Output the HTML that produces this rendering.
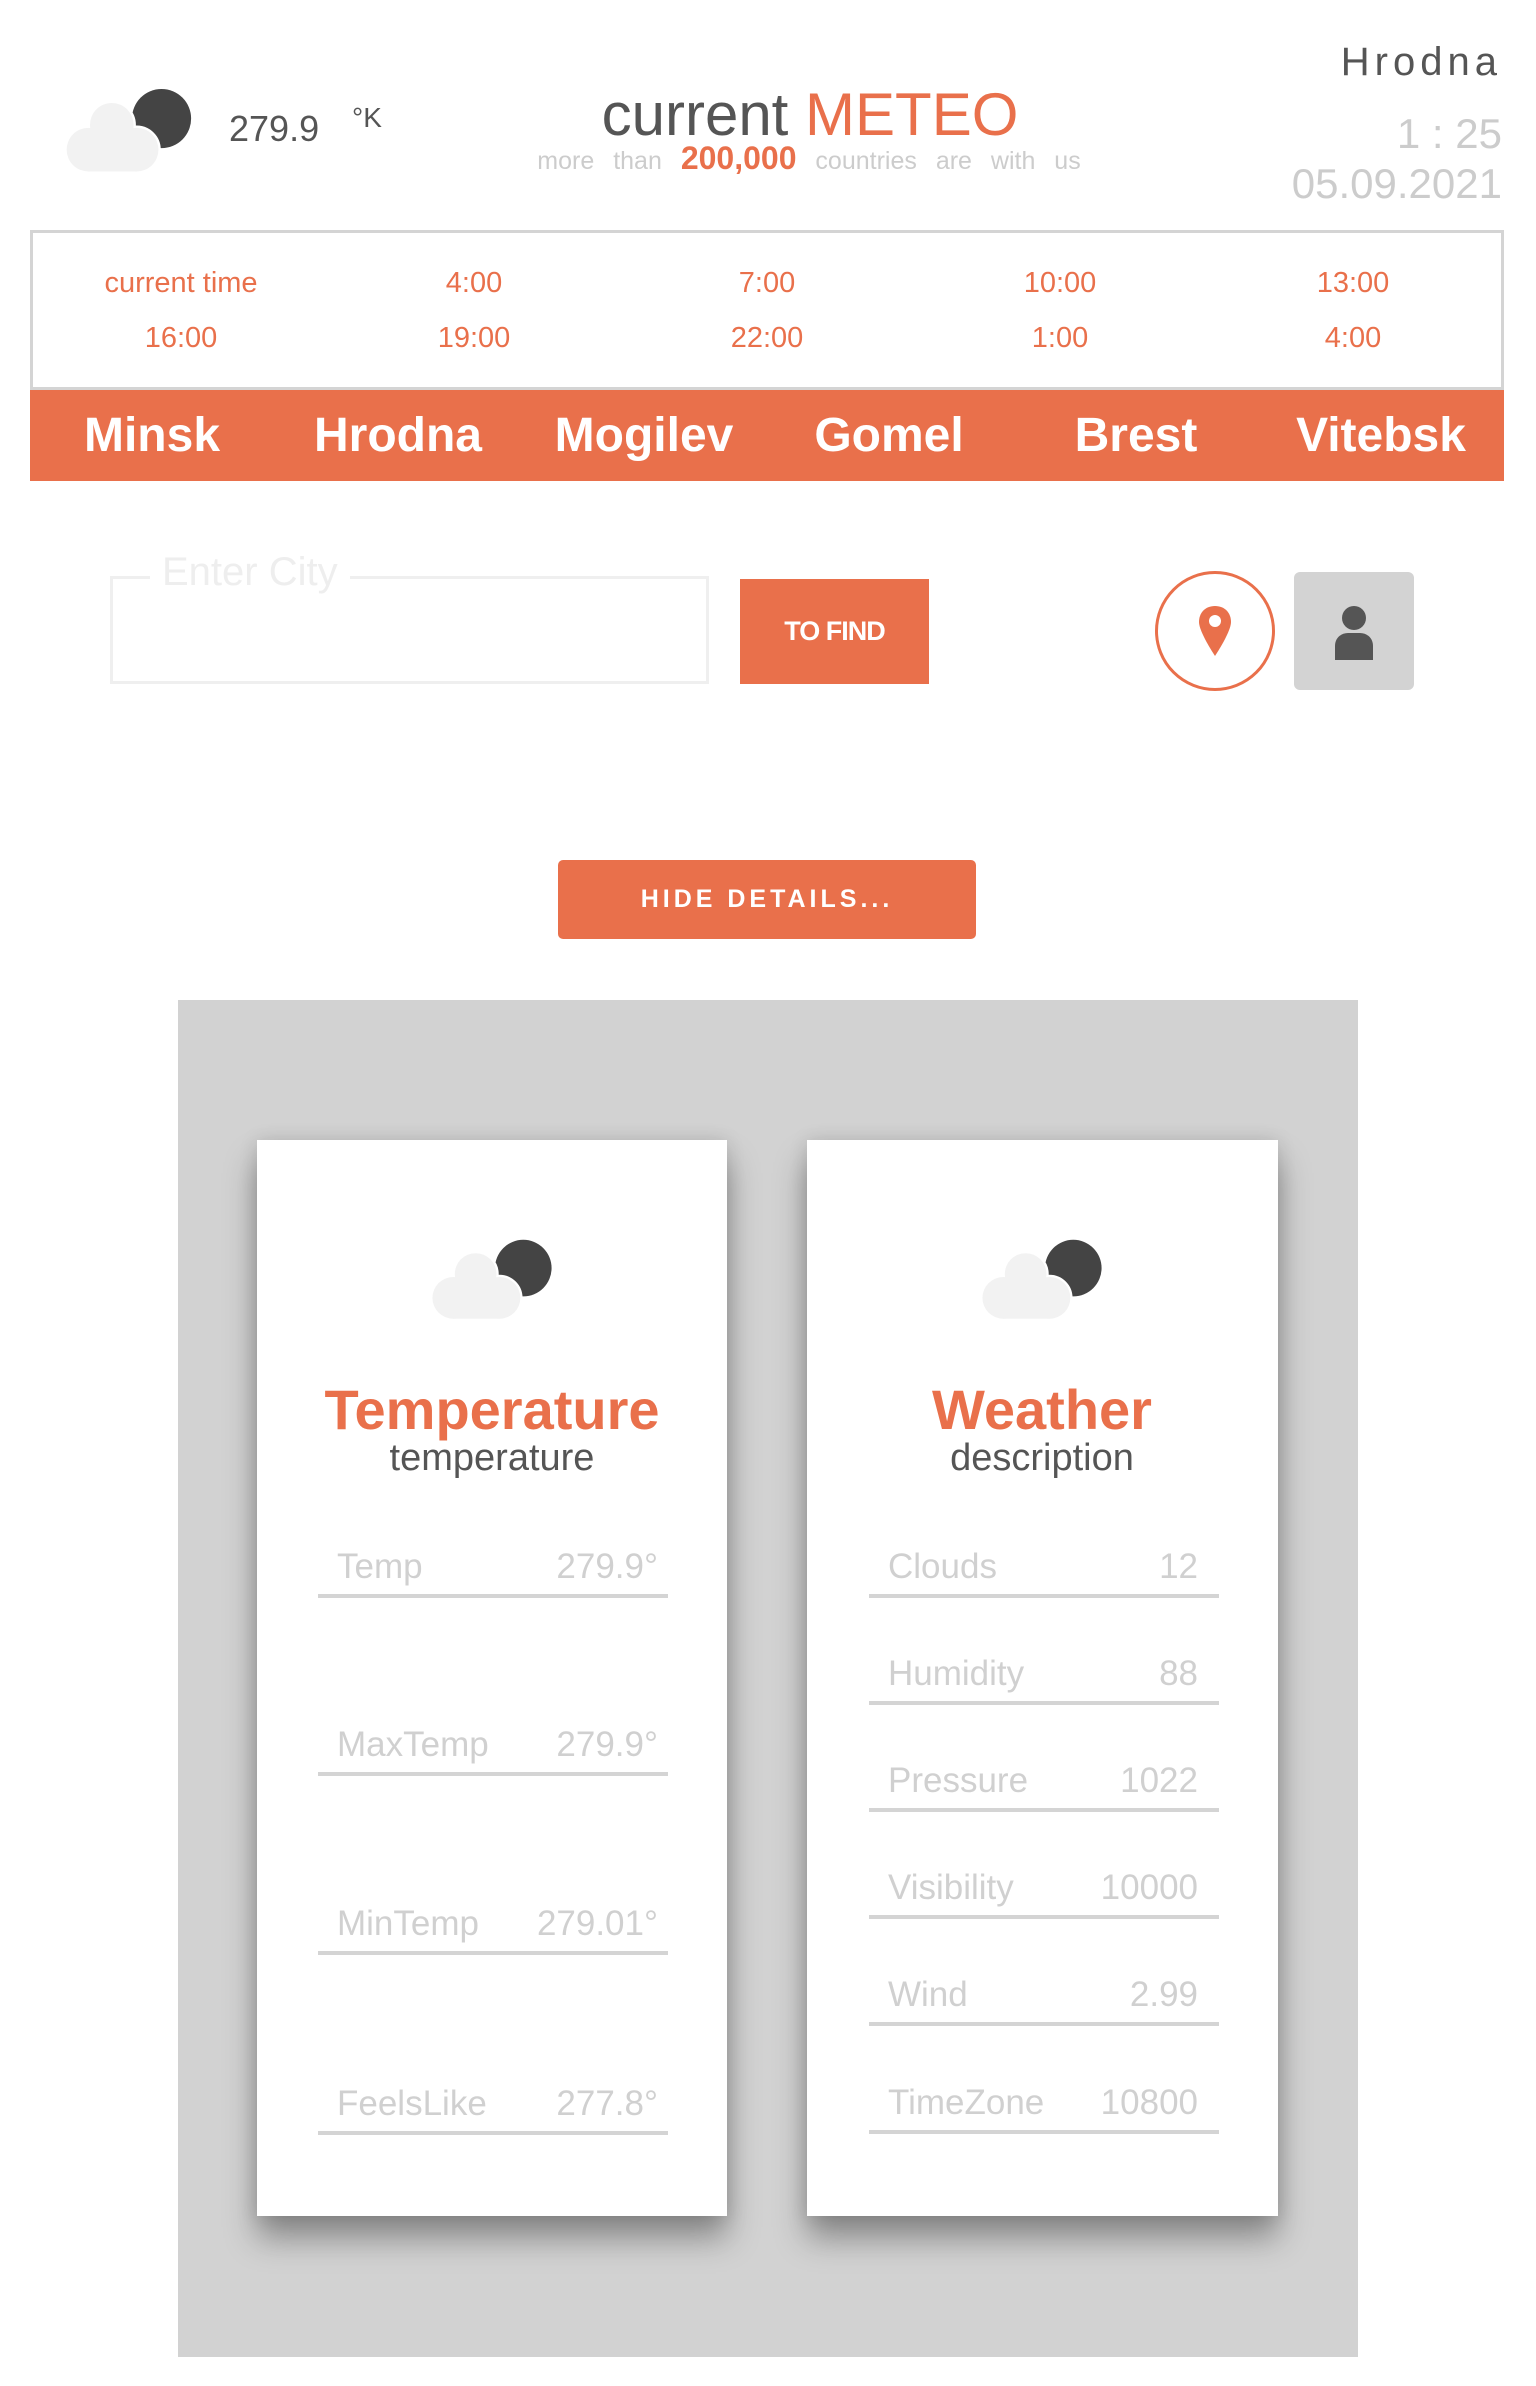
<!DOCTYPE html>
<html><head><meta charset="utf-8"><style>
*{margin:0;padding:0;box-sizing:border-box}
body{width:1536px;height:2386px;background:#fff;font-family:"Liberation Sans",sans-serif;position:relative;overflow:hidden}
.a{position:absolute}
.o{color:#e9704b}
.c{text-align:center;transform:translateX(-50%);white-space:nowrap}
.row{position:absolute;height:4px;background:#d4d4d4}
.lbl{position:absolute;font-size:35px;color:#d0d0d0;white-space:nowrap}
.val{position:absolute;font-size:35px;color:#d0d0d0;text-align:right;white-space:nowrap}
.card{position:absolute;background:#fff;box-shadow:0 22px 30px rgba(0,0,0,.35),0 0 18px rgba(0,0,0,.12)}
</style></head><body>
<svg class="a" style="left:62px;top:84px" width="140" height="94" viewBox="0 0 90 60"><circle cx="64" cy="22" r="19" fill="#444"/><g fill="#f2f2f2" stroke="#fff" stroke-width="3"><circle cx="32" cy="26" r="14"/><circle cx="17" cy="42" r="14"/><circle cx="48" cy="42" r="14"/></g><g fill="#f2f2f2"><circle cx="32" cy="26" r="14"/><circle cx="17" cy="42" r="14"/><circle cx="48" cy="42" r="14"/><rect x="17" y="36" width="31" height="20"/></g></svg>
<div class="a" style="left:229px;top:108px;font-size:36px;color:#555">279.9</div>
<div class="a" style="left:352px;top:102px;font-size:28px;color:#555">°K</div>
<div class="a c" style="left:810px;top:80px;font-size:60px;color:#555">current <span class="o">METEO</span></div>
<div class="a c" style="left:809px;top:140px;font-size:25px;color:#ccc;word-spacing:12px">more than <b class="o" style="font-size:32px">200,000</b> countries are with us</div>
<div class="a" style="right:34px;top:40px;font-size:40px;color:#555;letter-spacing:5px">Hrodna</div>
<div class="a" style="right:34px;top:110px;font-size:42px;color:#ccc">1 : 25</div>
<div class="a" style="right:34px;top:160px;font-size:42px;color:#ccc">05.09.2021</div>
<div class="a" style="left:30px;top:230px;width:1474px;height:160px;border:3px solid #d4d4d4"></div>
<div class="a o" style="top:267px;left:0;width:1536px;font-size:29px">
<span class="a c" style="left:181px">current time</span><span class="a c" style="left:474px">4:00</span><span class="a c" style="left:767px">7:00</span><span class="a c" style="left:1060px">10:00</span><span class="a c" style="left:1353px">13:00</span></div>
<div class="a o" style="top:322px;left:0;width:1536px;font-size:29px">
<span class="a c" style="left:181px">16:00</span><span class="a c" style="left:474px">19:00</span><span class="a c" style="left:767px">22:00</span><span class="a c" style="left:1060px">1:00</span><span class="a c" style="left:1353px">4:00</span></div>
<div class="a" style="left:30px;top:390px;width:1474px;height:91px;background:#e9704b;color:#fff;font-size:48px;font-weight:bold">
<span class="a c" style="left:122px;top:18px">Minsk</span><span class="a c" style="left:368px;top:18px">Hrodna</span><span class="a c" style="left:614px;top:18px">Mogilev</span><span class="a c" style="left:859px;top:18px">Gomel</span><span class="a c" style="left:1106px;top:18px">Brest</span><span class="a c" style="left:1351px;top:18px">Vitebsk</span></div>
<div class="a" style="left:110px;top:576px;width:599px;height:108px;border:3px solid #efefef"></div>
<div class="a" style="left:150px;top:550px;padding:0 12px;background:#fff;font-size:40px;color:#eee">Enter City</div>
<div class="a" style="left:740px;top:579px;width:189px;height:105px;background:#e9704b;color:#fff;font-weight:bold;font-size:27px;text-align:center;line-height:105px;letter-spacing:-1px">TO FIND</div>
<div class="a" style="left:1155px;top:571px;width:120px;height:120px;border:3px solid #e9704b;border-radius:50%"></div>
<svg class="a" style="left:1196px;top:604px" width="38" height="54" viewBox="0 0 38 54"><path d="M19 2C9 2 3 9 3 18c0 10 16 34 16 34s16-24 16-34C35 9 29 2 19 2z" fill="#e9704b"/><circle cx="19" cy="17" r="6" fill="#fff"/></svg>
<div class="a" style="left:1294px;top:572px;width:120px;height:118px;background:#d3d3d3;border-radius:6px"></div>
<svg class="a" style="left:1331px;top:604px" width="46" height="56" viewBox="0 0 46 56"><circle cx="23" cy="14" r="12" fill="#555"/><path d="M4 56V42c0-8 6-13 13-13h12c7 0 13 5 13 13v14z" fill="#555"/></svg>
<div class="a" style="left:558px;top:860px;width:418px;height:79px;background:#e9704b;border-radius:5px;color:#fff;font-weight:bold;font-size:25px;letter-spacing:4px;text-align:center;line-height:79px">HIDE DETAILS...</div>
<div class="a" style="left:178px;top:1000px;width:1180px;height:1357px;background:#d2d2d2"></div>
<div class="card" style="left:257px;top:1140px;width:470px;height:1076px"></div>
<div class="card" style="left:807px;top:1140px;width:471px;height:1076px"></div>
<svg class="a" style="left:428px;top:1235px" width="134" height="90" viewBox="0 0 90 60"><circle cx="64" cy="22" r="19" fill="#444"/><g fill="#f2f2f2" stroke="#fff" stroke-width="3"><circle cx="32" cy="26" r="14"/><circle cx="17" cy="42" r="14"/><circle cx="48" cy="42" r="14"/></g><g fill="#f2f2f2"><circle cx="32" cy="26" r="14"/><circle cx="17" cy="42" r="14"/><circle cx="48" cy="42" r="14"/><rect x="17" y="36" width="31" height="20"/></g></svg>
<svg class="a" style="left:978px;top:1235px" width="134" height="90" viewBox="0 0 90 60"><circle cx="64" cy="22" r="19" fill="#444"/><g fill="#f2f2f2" stroke="#fff" stroke-width="3"><circle cx="32" cy="26" r="14"/><circle cx="17" cy="42" r="14"/><circle cx="48" cy="42" r="14"/></g><g fill="#f2f2f2"><circle cx="32" cy="26" r="14"/><circle cx="17" cy="42" r="14"/><circle cx="48" cy="42" r="14"/><rect x="17" y="36" width="31" height="20"/></g></svg>
<div class="a c o" style="left:492px;top:1377px;font-size:56px;font-weight:bold">Temperature</div>
<div class="a c" style="left:492px;top:1437px;font-size:38px;color:#555">temperature</div>
<div class="a c o" style="left:1042px;top:1377px;font-size:56px;font-weight:bold">Weather</div>
<div class="a c" style="left:1042px;top:1437px;font-size:38px;color:#555">description</div>

<div class="row" style="left:318px;top:1594px;width:350px"></div>
<div class="lbl" style="left:337px;top:1547px">Temp</div><div class="val" style="right:878px;top:1547px">279.9°</div>
<div class="row" style="left:318px;top:1772px;width:350px"></div>
<div class="lbl" style="left:337px;top:1725px">MaxTemp</div><div class="val" style="right:878px;top:1725px">279.9°</div>
<div class="row" style="left:318px;top:1951px;width:350px"></div>
<div class="lbl" style="left:337px;top:1904px">MinTemp</div><div class="val" style="right:878px;top:1904px">279.01°</div>
<div class="row" style="left:318px;top:2131px;width:350px"></div>
<div class="lbl" style="left:337px;top:2084px">FeelsLike</div><div class="val" style="right:878px;top:2084px">277.8°</div>

<div class="row" style="left:869px;top:1594px;width:350px"></div>
<div class="lbl" style="left:888px;top:1547px">Clouds</div><div class="val" style="right:338px;top:1547px">12</div>
<div class="row" style="left:869px;top:1701px;width:350px"></div>
<div class="lbl" style="left:888px;top:1654px">Humidity</div><div class="val" style="right:338px;top:1654px">88</div>
<div class="row" style="left:869px;top:1808px;width:350px"></div>
<div class="lbl" style="left:888px;top:1761px">Pressure</div><div class="val" style="right:338px;top:1761px">1022</div>
<div class="row" style="left:869px;top:1915px;width:350px"></div>
<div class="lbl" style="left:888px;top:1868px">Visibility</div><div class="val" style="right:338px;top:1868px">10000</div>
<div class="row" style="left:869px;top:2022px;width:350px"></div>
<div class="lbl" style="left:888px;top:1975px">Wind</div><div class="val" style="right:338px;top:1975px">2.99</div>
<div class="row" style="left:869px;top:2130px;width:350px"></div>
<div class="lbl" style="left:888px;top:2083px">TimeZone</div><div class="val" style="right:338px;top:2083px">10800</div>
</body></html>
